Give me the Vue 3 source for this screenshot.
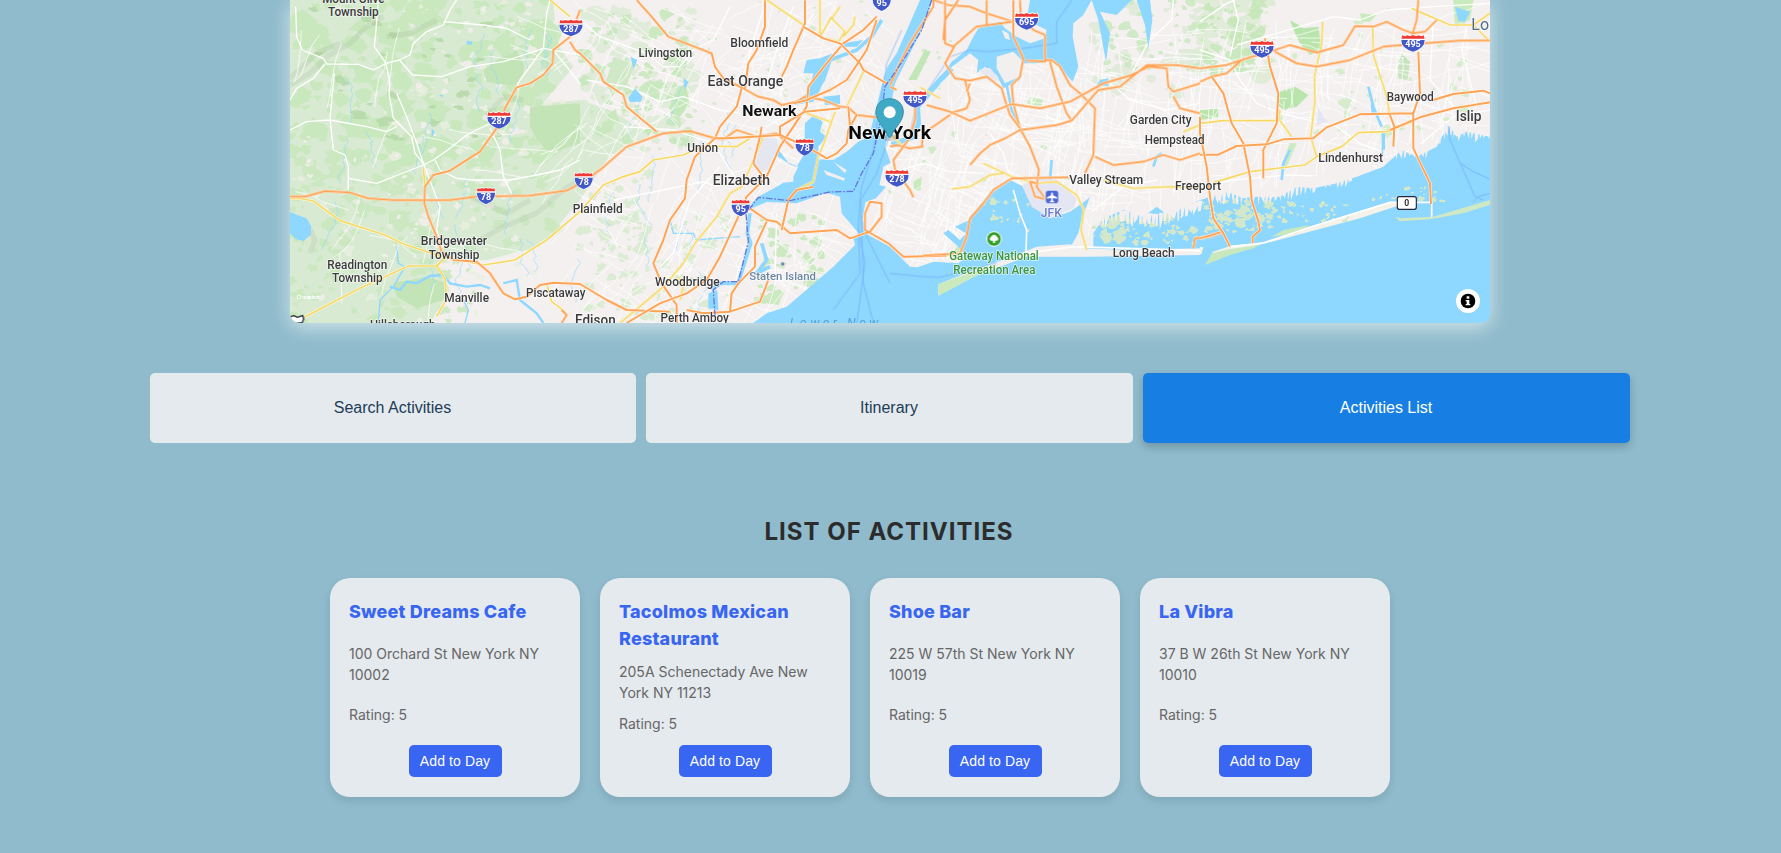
<script setup>
// Map sheets share one drawing space; each has its own horizontal offset.
const sheet = { A: -60, B: 870, C: 1800, D: 2730 }
const shift = (s) => `translate(${sheet[s]} 0)`

let seed = 41
const rnd = () => {
  seed = (seed * 1664525 + 1013904223) % 4294967296
  return seed / 4294967296
}
const snap = (v) => Math.round(v / 3) * 3

function scatter(count, x, y, w, h, min, max, flat = 0.8) {
  let d = ''
  for (let i = 0; i < count; i++) {
    const cx = x + rnd() * w
    const cy = y + rnd() * h
    const r = min + rnd() * rnd() * (max - min)
    const n = 9 + Math.floor(rnd() * 5)
    for (let k = 0; k < n; k++) {
      const a = (k / n) * Math.PI * 2
      const q = r * (0.45 + rnd() * 0.75)
      d += (k ? 'L' : 'M') + snap(cx + Math.cos(a) * q) + ' ' + snap(cy + Math.sin(a) * q * flat)
    }
    d += 'z'
  }
  return d
}

function streets(count, x, y, w, h, tilt, len) {
  let d = ''
  for (let i = 0; i < count; i++) {
    let px = x + rnd() * w
    let py = y + rnd() * h
    let a = tilt + (rnd() > 0.5 ? Math.PI / 2 : 0) + (rnd() - 0.5) * 0.5
    d += `M${Math.round(px)} ${Math.round(py)}`
    for (let k = 0; k < 4; k++) {
      a += (rnd() - 0.5) * 0.35
      px += Math.cos(a) * len * (0.4 + rnd() * 0.6)
      py += Math.sin(a) * len * (0.4 + rnd() * 0.6)
      d += `L${Math.round(px)} ${Math.round(py)}`
    }
  }
  return d
}

function streams(count, x, y, w, h) {
  let d = ''
  for (let i = 0; i < count; i++) {
    let px = x + rnd() * w
    let py = y + rnd() * h
    d += `M${Math.round(px)} ${Math.round(py)}`
    for (let k = 0; k < 12; k++) {
      px += (rnd() - 0.5) * 22
      py += 4 + rnd() * 12
      d += `L${Math.round(px)} ${Math.round(py)}`
    }
  }
  return d
}

// Narrow peninsulas hanging from the south shore into the bay
function teeth(points) {
  let d = ''
  for (let i = 0; i < points.length - 1; i++) {
    const [x1, y1] = points[i]
    const [x2, y2] = points[i + 1]
    for (let t = 0; t < 1; t += 13 / Math.abs(x2 - x1)) {
      const x = x1 + (x2 - x1) * t
      const y = y1 + (y2 - y1) * t
      const w = 3 + rnd() * 7
      d += `M${x - w} ${y - 18}L${x - w + 2} ${y + rnd() * 34}L${x + 2} ${y + 2 + rnd() * 28}L${x + w} ${y - 18}z`
    }
  }
  return d
}

const woods = [
  ['A', scatter(230, 60, 0, 780, 480, 12, 60), '#c5e7ba'],
  ['A', scatter(130, 60, 440, 800, 290, 8, 44), '#c8e8bd'],
  ['A', scatter(70, 60, 720, 560, 250, 8, 30), '#c8e8bd'],
  ['A', scatter(90, 60, 0, 850, 960, 5, 26), '#eaefe1'],
  ['A', scatter(120, 420, 0, 450, 960, 5, 22), '#f2efed'],
  ['A', scatter(24, 60, 400, 350, 500, 5, 18), '#f2efed'],
  ['A', scatter(30, 90, 20, 650, 420, 10, 36, 0.5), '#b5d8a8'],
  ['B', scatter(140, 0, 30, 350, 420, 8, 44), '#dcebd5'],
  ['B', scatter(100, 0, 30, 330, 400, 6, 34), '#c5e7ba'],
  ['B', scatter(50, 0, 500, 220, 250, 6, 30), '#d7ebcf'],
  ['B', scatter(80, 20, 640, 420, 320, 6, 30), '#d7ebcf'],
  ['B', scatter(38, 320, 0, 540, 460, 5, 15), '#d4ebcb'],
  ['B', scatter(40, 530, 650, 200, 250, 8, 38), '#c4e7b8'],
  ['C', scatter(26, 0, 20, 550, 680, 5, 20), '#cdeac3'],
  ['C', scatter(34, 600, 0, 330, 280, 8, 50), '#deead7'],
  ['C', scatter(36, 650, 0, 280, 220, 6, 30), '#c9e9bf'],
  ['D', scatter(90, 0, 0, 210, 220, 8, 50), '#dcebd3'],
  ['D', scatter(60, 0, 0, 190, 210, 6, 34), '#c3e7b7'],
  ['D', scatter(42, 200, 0, 610, 420, 5, 28), '#d0ebc7']
]

const parks = [
  ['A', 'M680 180L740 150L765 200L750 240L725 258L650 245L640 210z', '#c2e4b6'],
  ['A', 'M780 320L930 310L930 430L840 460L800 420L780 380z', '#c2e4b6'],
  ['A', 'M370 850L470 830L530 850L520 900L440 925L380 890z', '#c2e4b6'],
  ['B', 'M315 250L330 310L300 350L270 340L275 290z', '#c5e8ba'],
  ['B', 'M100 170L165 195L140 255L95 290L80 240z', '#d0e8c6'],
  ['C', 'M105 150L122 155L80 240L55 240z', '#c2e6b7'],
  ['C', 'M180 768L225 710L270 712L275 752L240 775z', '#c8eabc'],
  ['C', 'M420 290L458 300L456 318L410 312z', '#c8eabc'],
  ['C', 'M70 545L95 530L92 570L72 572z', '#c8eabc'],
  ['D', 'M270 60L310 85L355 80L365 150L330 165L300 130L285 100z', '#b9e4ac'],
  ['D', 'M240 275L285 260L325 285L290 320L250 330L235 315z', '#b9e4ac'],
  ['D', 'M0 330L55 325L55 352L0 360z', '#b9e4ac'],
  ['D', 'M605 160L630 185L622 240L595 235L592 190z', '#c8e3be'],
  ['D', 'M270 430L290 430L265 490L245 520L248 485z', '#cceac3'],
  ['D', 'M480 40L530 45L510 65L485 65z', '#c8eabc'],
  ['D', 'M760 0L820 0L810 60L765 75z', '#c8eabc']
]

const smallRoads = [
  ['A', streets(24, 60, 0, 700, 900, 0.3, 60)],
  ['B', streets(210, -20, -20, 850, 960, 0.55, 60)],
  ['B', streets(70, 480, 0, 440, 500, 1.1, 40)],
  ['C', streets(150, 180, 150, 440, 480, 0.25, 55)],
  ['C', streets(90, -30, 400, 260, 370, 0.4, 40)],
  ['C', streets(80, 560, 80, 370, 520, 0.1, 55)],
  ['D', streets(150, 0, 60, 860, 420, 0.12, 60)]
]

const whiteRoads = [
  ['A', 'M77 20L80 110L97 150L160 175L170 192L265 193L310 210L348 190L388 180L420 165L430 130L470 95L520 75L540 30L560 0'],
  ['A', 'M60 300L80 265L130 235L165 192M325 0L318 90L313 140L348 190L360 250L357 280L370 355L425 410L435 460L460 490L510 620L500 690L515 750'],
  ['A', 'M388 180L428 225L515 230L600 200L700 185L820 145L930 165M820 145L750 240L720 300M820 145L830 40L840 0M850 150L930 250'],
  ['A', 'M235 535L320 550L460 495L490 480L540 445L590 405L650 375L700 360M235 535L235 570M495 480L510 510L560 535L610 540L720 540L800 525L870 510L930 480M660 385L690 450L700 530L725 580'],
  ['A', 'M60 390L110 365L180 360L290 380L350 395L380 380M193 220L180 355L190 450L225 465L235 500L235 570M380 280L410 350L440 430L460 490M520 65L640 75L710 85L780 120'],
  ['B', 'M0 60L60 110L130 135L200 160L250 200L300 200L340 150L400 120L450 20M20 240L140 260L240 305L310 290L420 330L480 340M100 600L250 570L370 545L410 560L440 540'],
  ['B', 'M560 0L520 120L500 200M640 20L590 150L560 250M700 40L620 180L600 290M240 800L280 760L330 600L420 500M590 640L585 830L620 860M130 380L280 390L400 430L470 540'],
  ['C', 'M370 570L390 640L410 690L408 760L590 740M370 570L340 460L300 400M0 520L100 490L180 515L280 520M190 690L240 770L265 800M850 0L845 60L780 120L730 210M640 230L720 300L830 330L930 310M600 640L700 560L800 540'],
  ['D', 'M0 65L80 10L105 0M100 0L115 60L90 170M0 150L90 180L120 240L170 310L240 340L410 380L480 430L560 460M110 135L300 80L400 50L480 60L560 30L700 20L870 10M700 60L690 240L780 340M800 80L785 150L830 320M0 560L100 540L260 525L400 530L520 480L640 450L760 350L870 330']
]

const ocean = [
  ['B', 'M520 969L560 940L620 920L690 860L760 800L825 735L820 715L838 702L815 675L785 640L780 590L740 578L650 610L560 606L515 625L515 610L535 590L590 560L610 548L640 545L655 500L625 488L588 438L582 462L632 494L650 500L675 458L688 480L705 455L715 478L760 480L800 455L835 425L868 410L884 340L905 260L920 205L950 160L985 80L1020 0L1056 0L1035 70L990 160L945 250L930 330L930 380L915 440L932 488L910 500L898 555L918 560L888 595L856 607L848 660L865 705L930 740L960 770L990 800L1060 805L1140 790L1140 835L1180 870L3600 969z'],
  ['B', 'M675 370L702 345L728 365L720 395L740 410L715 440L715 470L700 520L670 560L645 600L640 530L672 465z'],
  ['C', 'M0 808L75 805L130 785L205 790L230 770L210 745L160 700L175 690L210 720L228 700L195 680L238 660L290 590L360 540L400 560L425 610L480 655L540 635L590 600L600 590L582 640L565 700L545 735L610 745L610 700L640 655L700 630L760 650L800 620L840 650L880 620L930 600L1010 575L1060 595L1090 590L1170 590L1220 560L1270 565L1340 550L1400 530L1480 500L1535 450L1580 470L1640 440L1675 375L1700 410L1730 395L1800 410L1800 969L-200 969z'],
  ['C', 'M165 215L185 185L230 150L250 110L265 85L330 65L345 85L380 110L420 130L465 115L470 90L410 60L420 0L605 0L580 45L550 70L548 110L565 200L548 245L525 220L490 180L440 190L400 190L390 240L340 265L320 225L285 200L260 220L265 180L240 160L200 190z'],
  ['C', 'M605 0L625 60L648 185L660 100L630 35L680 45L725 0zM740 0L765 75L775 145L787 60L780 0zM630 240L655 235L655 258L620 255z'],
  ['B', 'M680 180L720 175L760 160L745 210L720 270L700 305L640 315L685 275L700 220L670 220zM730 290L780 285L780 312L735 315zM790 130L850 120L830 140L780 140zM385 880L412 870L415 930L385 925z'],
  ['B', 'M152 170L172 180L160 208zM145 295L165 265L187 290L183 305L150 306zM310 235L325 245L315 270z'],
  ['A', 'M60 635L82 645L110 655L124 680L122 705L100 723L78 718L60 700zM590 122L608 125L603 135L590 132zM505 284L520 286L518 292zM485 385L494 395L485 415z'],
  ['D', 'M765 20L810 35L795 65L775 62zM512 310L530 335L515 345zM545 400L555 400L555 465L545 465z']
]

const islands = [
  ['B', 'M730 510L795 535L792 542L740 525zM760 485L800 510L795 520z', '#f2efef'],
  ['C', 'M145 887L145 853L265 805L350 776L440 740L540 733L590 745L550 770L410 770L330 800L250 830z', '#f3f0ee'],
  ['C', 'M145 887L145 853L265 810L330 792L250 832z', '#cbe9bd'],
  ['C', 'M550 770L575 745L720 750L930 745L930 765L740 768L600 770z', '#f3f0ee'],
  ['D', 'M0 740L10 742L5 762L0 763zM35 757L90 738L190 727L330 680L570 605L610 612L480 655L300 703L150 742L50 765z', '#f4f2e9'],
  ['D', 'M15 795L35 760L90 747L180 735L160 745L90 765zM215 710L250 690L330 675L290 700z', '#c8e8be'],
  ['D', 'M585 650L602 655L700 650L870 600L870 614L790 640L690 658L600 664z', '#cfe9c4'],
  ['C', scatter(16, 260, 600, 270, 100, 5, 24), '#d2e8ca'],
  ['C', 'M320 170L370 155L400 185L390 230L345 250L320 205zM335 90L355 100L360 120L345 115z', '#f2efef'],
  ['C', 'M265 210L300 203L328 240L310 245z', '#e7e8f2'],
  ['C', scatter(80, 610, 650, 320, 80, 4, 22), '#d3e7ca'],
  ['D', scatter(80, 0, 600, 220, 95, 4, 22), '#d3e7ca'],
  ['D', scatter(38, 200, 605, 250, 65, 4, 19), '#d3e7ca'],
  ['D', scatter(24, 520, 560, 220, 44, 3, 12), '#d3e7ca'],
  ['C', teeth([[600, 655], [700, 650], [800, 660], [930, 620]]), '#f3f0ef'],
  ['D', teeth([[0, 585], [60, 590], [240, 580], [350, 545], [440, 528], [540, 473], [590, 450], [680, 450], [740, 388], [870, 402]]), '#f3f0ef'],
  ['B', 'M550 415L590 415L595 440L565 505L540 520L525 490L530 440z', '#e4e6f0'],
  ['C', 'M395 555L450 535L500 540L560 595L550 625L480 655L425 620z', '#e4e6f3'],
  ['D', 'M355 320L370 350L385 365L350 375z', '#e4e6f3']
]

const lanes = [
  ['B', 'M965 90L920 190L905 280L890 380L880 450L845 560L840 600L835 690L855 790L830 969M930 400L890 520L842 600L845 690L850 850L880 969M835 690L840 820L760 930M855 700L930 850'],
  ['C', 'M0 820L100 830L150 832L320 790M545 0L500 65L500 130L400 145L290 155L240 150L180 170L120 260L75 330L60 400'],
  ['D', 'M745 380L750 420L825 590L850 600M780 490L820 515L870 538M820 605L835 590L870 580']
]

const yellowRoads = [
  ['A', 'M60 595L95 596L130 603L210 662L345 705L400 732L515 770L640 795L735 780L830 720L930 635L960 600L1000 555L1060 530L1110 515L1150 480L1240 465L1300 438L1400 440L1440 415'],
  ['A', 'M105 950L270 865L415 798L500 798L525 835L530 895L500 950M500 798L530 770M460 505L465 560M840 0L900 50M830 850L845 905L885 935'],
  ['B', 'M120 969L250 860L310 790L345 730L410 650L450 580L485 560L525 470L550 410M300 900L310 860L295 830M560 0L670 75M755 50L720 110L720 0M755 55L795 95L775 125L740 115M825 50L820 75L790 110M680 340L750 365M855 205L800 320M765 335L735 420L715 470L700 545L650 570M780 20L755 55'],
  ['C', 'M90 262L150 295M280 490L365 530L440 550L500 545L560 585L582 630L573 690L590 750M185 567L240 560L300 525L340 520M640 540L730 565L840 560L930 563M880 395L930 375M0 400L40 440'],
  ['D', 'M0 370L70 362L235 362L240 330M240 362L275 410M368 65L365 130L343 230L345 300L332 410L350 470L315 495L150 515L40 548M350 470L425 440L475 398L560 395L640 365M518 80L520 165L560 290L570 350M635 25L750 75L820 75L870 40M820 75L870 125']
]

const orangeRoads = [
  ['A', 'M60 590L105 590L165 573L240 578L295 595L370 600L540 600L620 590L780 587L890 572L930 550L990 510L1070 440L1180 400L1260 393L1335 415L1360 418L1400 390L1460 410L1520 400L1570 445'],
  ['A', 'M930 30L900 110L850 150L848 190L820 225L780 250L740 262L705 325L690 370L630 455L540 512L490 525L465 560L463 610L475 650L500 710L515 755L550 780L620 785L660 820L700 880L735 898L770 890L810 855L850 848L930 852L1010 900L1070 930L1200 935'],
  ['A', 'M900 125L915 150L930 160L990 220L1000 245L1060 285L1070 320L1160 395M875 969L890 945L875 930'],
  ['B', 'M170 0L215 50L265 110L305 125L395 160L405 200L430 235L490 265L535 290L580 300L605 315L650 305L675 290L730 300L780 320L805 322L830 345L920 355'],
  ['B', 'M485 265L470 320L420 380L405 415L345 470L320 540L315 595L270 660L250 720L220 790L245 850L290 915L290 969'],
  ['B', 'M555 0L555 80L530 150L505 190L495 265M675 0L675 70L640 150L620 200L605 230'],
  ['B', 'M140 969L240 910L320 880L380 840L420 770L475 650L500 590L560 530L600 440L650 365L680 320L685 260L740 190L790 130L850 90L890 50'],
  ['B', 'M405 415L440 415L520 410L600 405L680 440L740 475L770 460L800 430L805 390L830 345M545 380L540 410L520 490L550 530M600 405L600 380L675 335L780 325'],
  ['B', 'M510 625L560 660L590 665L630 700L770 690L810 715L870 695L905 650L905 610L870 605L855 640L855 690L925 730L970 770L1100 767'],
  ['B', 'M560 665L525 740L525 800L475 850L455 880L450 935M605 690L625 600L650 570L700 560M320 930L370 940L450 935L540 905L565 840'],
  ['B', 'M670 80L730 115L780 130L840 190L850 210L920 250M680 300L750 270L800 240L860 150L890 60M685 300L640 310M805 320L810 380'],
  ['C', 'M0 255L30 190L60 130L130 20L130 0L175 15L240 20L290 40L370 65L370 110L400 175L390 230L365 255L370 310L390 385L420 440L447 510L440 560L465 595'],
  ['C', 'M165 0L165 130L190 140M205 0L165 60L160 120M290 0L290 75M370 65L260 80L195 135L165 190L195 235L240 242L290 230L335 265L345 300L360 345L390 385M225 240L240 300L230 325L180 340'],
  ['C', 'M370 0L370 65M390 0L392 40L430 90L465 105L465 185L410 182M465 180L485 180L510 200L540 255L570 280L615 325L610 465L585 520M480 185L500 260L530 340L545 362'],
  ['C', 'M110 315L180 335L240 362L365 312L450 325L540 305L640 250L725 225L775 200L830 205L835 260L850 275L930 250M545 362L500 375L390 390L345 415L300 435L270 460L240 495M545 362L625 270L690 260L770 195L860 195L930 205'],
  ['C', 'M535 532L365 535L310 570L280 610L240 655L230 710L210 760L100 767M440 550L420 545L435 590L465 597M615 470L670 495L760 485L820 465L870 480L930 460M850 290L870 325L930 340M100 440L60 445L20 435L0 440M95 440L100 400L180 345'],
  ['C', 'M0 260L20 270M240 250L230 275M30 530L60 570L70 592M75 320L75 360L55 420L10 480L20 530M910 745L915 715L960 710L1000 695'],
  ['D', 'M0 205L80 195L150 172L210 155L270 135L350 158L430 135L465 78L520 80L560 65L610 90L640 100L675 95L710 60M0 245L35 230L80 220L125 180L150 172M225 155L290 190L350 200L450 180L550 140L640 132L780 122L870 122M655 0L650 60L635 110'],
  ['D', 'M35 230L70 280L95 370L130 430L150 530L155 600L175 665L180 690L158 710L158 730M195 115L210 200L235 280L230 370L190 450L190 535'],
  ['D', 'M0 464L55 464L110 438L200 433L250 418L340 415L380 382L480 343L640 340L660 280L655 155M570 345L583 380L580 440M570 390L660 352L760 325L870 307M700 300L760 282L850 272L870 280M640 340L640 445L690 550L693 612'],
  ['D', 'M0 350L0 400L20 500L30 590L40 655L70 700L90 740M0 715L60 697']
]

const labels = [
  ['A', 250, 8, 'Mount Olive', 187], ['A', 250, 48, 'Township', 152],
  ['A', 552, 736, 'Bridgewater', 199], ['A', 552, 777, 'Township', 152],
  ['A', 262, 807, 'Readington', 180], ['A', 262, 847, 'Township', 152],
  ['A', 590, 906, 'Manville', 134], ['A', 857, 891, 'Piscataway', 178],
  ['A', 398, 986, 'Hillsborough', 196],
  ['B', 256, 172, 'Livingston', 161], ['B', 538, 141, 'Bloomfield', 174],
  ['B', 496, 257, 'East Orange', 227, 42], ['B', 568, 348, 'Newark', 163, 44, 700, '#111'],
  ['B', 368, 456, 'Union', 92], ['B', 484, 555, 'Elizabeth', 172, 42],
  ['B', 53, 640, 'Plainfield', 150], ['B', 322, 858, 'Woodbridge', 194],
  ['B', 344, 966, 'Perth Amboy', 205], ['B', 46, 974, 'Edison', 122, 42],
  ['B', 608, 839, 'Staten Island', 200, 35, 500, '#6c86a4'],
  ['C', -1, 416, 'New York', 248, 54, 700, '#090909'],
  ['C', 812, 372, 'Garden City', 185], ['C', 854, 431, 'Hempstead', 180],
  ['C', 649, 552, 'Valley Stream', 222], ['C', 924, 571, 'Freeport', 138],
  ['C', 761, 770, 'Long Beach', 186],
  ['C', 484, 651, 'JFK', 63, 36, 500, '#6b7bcf'],
  ['C', 312, 779, 'Gateway National', 268, 36, 500, '#39943a'],
  ['C', 313, 822, 'Recreation Area', 246, 36, 500, '#39943a'],
  ['D', 452, 487, 'Lindenhurst', 194], ['D', 631, 304, 'Baywood', 141],
  ['D', 806, 363, 'Islip', 77, 42]
]

const shields = [
  ['A', 903, 84, '287'], ['A', 687, 361, '287'], ['A', 648, 588, '78'], ['B', 11, 543, '78'],
  ['B', 674, 442, '78'], ['B', 482, 624, '95'], ['B', 905, 8, '95'], ['C', 410, 64, '695'],
  ['C', 75, 298, '495'], ['C', 21, 535, '278'], ['D', 186, 148, '495'], ['D', 639, 130, '495']
]

const tabs = [
  { name: 'Search Activities', active: false },
  { name: 'Itinerary', active: false },
  { name: 'Activities List', active: true }
]

const activities = [
  { name: 'Sweet Dreams Cafe', address: '100 Orchard St New York NY 10002', rating: 5 },
  { name: 'Tacolmos Mexican Restaurant', address: '205A Schenectady Ave New York NY 11213', rating: 5 },
  { name: 'Shoe Bar', address: '225 W 57th St New York NY 10019', rating: 5 },
  { name: 'La Vibra', address: '37 B W 26th St New York NY 10010', rating: 5 }
]
</script>

<template>
  <main class="page">
    <section class="map">
      <svg class="map-canvas" viewBox="0 0 3600 969">
        <rect width="3600" height="969" fill="#f3f0ef" />
        <path
          d="M0 0H790L800 130L850 200L760 310L870 300L960 330L1060 390L950 480L870 600L750 740L590 780L440 790L480 870L420 969H0z"
          fill="#d9ead2"
        />
        <path v-for="(p, i) in woods" :key="'w' + i" :transform="shift(p[0])" :d="p[1]" :fill="p[2]" opacity="0.85" />
        <path v-for="(p, i) in parks" :key="'p' + i" :transform="shift(p[0])" :d="p[1]" :fill="p[2]" />
        <g fill="none" stroke="#8f9f84" stroke-width="16" opacity="0.14" stroke-linejoin="round">
          <path d="M0 255L60 220L110 170L180 130L230 80L280 50M0 235L80 160L150 130M570 720L640 680L740 640L820 570L900 520M60 690L75 720L60 760M590 350L640 290L700 300M290 110L360 100L440 60M540 590L650 640L720 600" />
        </g>
        <g fill="none" stroke="#8ed7ff" stroke-width="2.5">
          <path :d="streams(22, 0, 0, 900, 850)" opacity="0.7" />
          <path :d="streams(12, 900, 200, 600, 650)" opacity="0.7" />
          <path stroke-width="7" d="M300 860L330 870L350 845L380 850L420 828L460 825L480 850L530 860L570 855L600 865M640 850L680 840L690 900L740 940L760 969" />
          <path stroke-width="4" d="M320 740L325 790L345 800L310 860L270 900L265 969M1140 660L1150 700L1210 700L1220 720L1280 715L1350 710M525 969L535 930L520 900" />
        </g>
        <g fill="none" stroke="#fff" stroke-linejoin="round">
          <path v-for="(p, i) in smallRoads" :key="'s' + i" :transform="shift(p[0])" :d="p[1]" stroke-width="2.4" opacity="0.9" />
        </g>
        <g fill="none" stroke="#fff" stroke-width="4" stroke-linejoin="round">
          <path v-for="(p, i) in whiteRoads" :key="'wr' + i" :transform="shift(p[0])" :d="p[1]" />
        </g>
        <path v-for="(p, i) in ocean" :key="'o' + i" :transform="shift(p[0])" :d="p[1]" fill="#8ed7ff" />
        <g fill="none" stroke="#8ed7ff" stroke-linejoin="round">
          <path stroke-width="16" d="M1985 205L1950 240L1920 275L1882 320L1885 370L1870 410L1805 435" />
          <path stroke-width="11" d="M1380 640L1372 700L1382 730L1360 800L1345 850L1290 850L1265 870M1415 730L1430 780L1400 820L1440 800M1775 60L1745 110L1700 150L1620 180L1600 240L1550 300" />
          <path stroke-width="8" d="M2150 255L2165 330L2190 380M2590 500L2600 470L2615 460M2280 540L2285 480M2975 540L2980 490L3000 450M3235 260L3250 320L3275 380" />
        </g>
        <path v-for="(p, i) in islands" :key="'i' + i" :transform="shift(p[0])" :d="p[1]" :fill="p[2]" />
        <path d="M2170 570L2190 640L2210 690L2208 760L2350 740L2730 752M2820 740L2920 729L3060 682L3300 607L3425 607V650" fill="none" stroke="#fff" stroke-width="5" />
        <g fill="none" stroke="#6aa5f3" stroke-width="2.5" opacity="0.7">
          <path v-for="(p, i) in lanes" :key="'l' + i" :transform="shift(p[0])" :d="p[1]" />
        </g>
        <g fill="none" stroke-linejoin="round">
          <g v-for="(p, i) in yellowRoads" :key="'y' + i" :transform="shift(p[0])">
            <path :d="p[1]" stroke="#fffdf4" stroke-width="8" />
            <path :d="p[1]" stroke="#f7d863" stroke-width="5.2" />
          </g>
          <g v-for="(p, i) in orangeRoads" :key="'r' + i" :transform="shift(p[0])">
            <path :d="p[1]" stroke="#fff8f0" stroke-width="9" />
            <path :d="p[1]" stroke="#ffa456" stroke-width="6" />
          </g>
          <path
            d="M1925 0L1895 90L1840 180L1785 260L1772 360L1750 460L1715 520L1690 574L1620 576L1500 602L1405 592L1368 640L1375 725L1345 845L1300 845L1270 870L1275 945"
            stroke="#6478dc" stroke-width="4" stroke-dasharray="20 5 5 5"
          />
        </g>

        <text class="label plain" x="1632" y="982" font-size="38" fill="#56a3dc" font-style="italic" text-anchor="middle" textLength="266">Lower New</text>
        <text class="label" x="3544" y="91" font-size="48" fill="#506a87">Long Island</text>
        <text
          v-for="(t, i) in labels" :key="'t' + i" class="label" :transform="shift(t[0])" :x="t[1]" :y="t[2]"
          :font-size="t[5] || 39" :font-weight="t[6] || 500" :fill="t[7] || '#3a3a3d'"
          :textLength="t[4]" lengthAdjust="spacingAndGlyphs" text-anchor="middle"
        >{{ t[3] }}</text>

        <g v-for="(s, i) in shields" :key="'h' + i" :transform="`translate(${sheet[s[0]] + s[1]} ${s[2]})`">
          <g :transform="s[3].length === 2 ? 'scale(.78 1)' : ''">
            <path d="M-34 -27Q-25 -21 -17 -27Q-9 -22 0 -27Q9 -22 17 -27Q25 -21 34 -27L37 -10Q38 14 0 27Q-38 14 -37 -10z" fill="#fff" />
            <path d="M-32 -24Q-25 -19 -17 -24Q-9 -20 0 -25Q9 -20 17 -24Q25 -19 32 -24L35 -14H-35z" fill="#ee3b38" />
            <path d="M-35 -10H35Q36 14 0 25Q-36 14 -35 -10z" fill="#4358c8" />
          </g>
          <text class="label plain" y="11" font-size="25" font-weight="700" fill="#fff" text-anchor="middle" :textLength="s[3].length * 15.5" lengthAdjust="spacingAndGlyphs">{{ s[3] }}</text>
        </g>

        <g transform="translate(3350 609)">
          <rect x="-28" y="-19" width="57" height="38" rx="6" fill="#fff" stroke="#24283a" stroke-width="3.5" />
          <text class="label plain" y="9" font-size="26" font-weight="700" fill="#333" text-anchor="middle">0</text>
        </g>
        <path d="M0 950L12 947L22 952L38 947L41 957L36 969H0z" fill="#fff" stroke="#24283a" stroke-width="4" />

        <circle cx="1478" cy="792" r="6.5" fill="#6c86a4" stroke="#fff" stroke-width="2" />
        <rect x="2266" y="571" width="40" height="40" rx="9" fill="#4c69d2" stroke="#fff" stroke-width="2" />
        <path d="M2286 577Q2289 577 2289 586L2301 592V596L2289 594L2288 601L2293 605V607H2279V605L2284 601L2283 594L2271 596V592L2283 586Q2283 577 2286 577z" fill="#fff" />
        <circle cx="2112" cy="717" r="22" fill="#33a02c" stroke="#fff" stroke-width="3" />
        <path d="M2102 722Q2096 715 2103 710Q2112 699 2121 710Q2128 715 2122 722H2115V729H2109V722z" fill="#fff" />

        <g opacity="0.9">
          <circle cx="27" cy="891" r="6" fill="none" stroke="#fff" stroke-width="3" />
          <text class="label plain" x="37" y="896" font-size="15" font-weight="700" fill="#fff" textLength="50">mapbox</text>
        </g>

        <g transform="translate(1799 337)">
          <ellipse cx="0" cy="76" rx="27" ry="10" fill="#000" opacity="0.13" />
          <path d="M0 -41C-24 -41 -41 -24 -41 -1C-41 28 -12 48 -5 72Q0 79 5 72C12 48 41 28 41 -1C41 -24 24 -41 0 -41z" fill="#3fa9c6" stroke="#328fa9" stroke-width="3" />
          <circle r="18" fill="#fff" />
        </g>

        <g transform="translate(3534 903)">
          <circle r="36" fill="#fff" />
          <circle r="22" fill="#000" />
          <path d="M-4 -14H4V-7H-4zM-7 -3H4V9H7V13H-7V9H-4V1H-7z" fill="#fff" />
        </g>
      </svg>
    </section>

    <nav class="tabs">
      <button v-for="t in tabs" :key="t.name" class="tab" :class="{ active: t.active }">{{ t.name }}</button>
    </nav>

    <h2 class="heading">List of Activities</h2>

    <section class="cards">
      <article v-for="a in activities" :key="a.name" class="card">
        <h3 class="name">{{ a.name }}</h3>
        <p class="line">{{ a.address }}</p>
        <p class="line">Rating: {{ a.rating }}</p>
        <button class="add">Add to Day</button>
      </article>
    </section>
  </main>
</template>

<style>
body {
  background: #8fbbcc;
  overflow: hidden;
}
</style>

<style scoped>
.page {
  width: 1780px;
  height: 853px;
  font-family: Inter, 'Liberation Sans', sans-serif;
}
.map {
  width: 1200px;
  height: 323px;
  margin: 0 auto;
  border-radius: 0 0 10px 10px;
  box-shadow: 0 4px 20px rgba(255, 255, 255, 0.65);
}
.map-canvas {
  display: block;
  width: 1200px;
  height: 323px;
  border-radius: 0 0 10px 10px;
}
.label {
  font-family: Roboto, 'Liberation Sans', sans-serif;
  paint-order: stroke;
  stroke: rgba(255, 255, 255, 0.75);
  stroke-width: 4px;
  stroke-linejoin: round;
}
.plain {
  stroke: none;
}
.tabs {
  display: grid;
  grid-template-columns: 486px 487px 487px;
  gap: 10px;
  width: 1480px;
  height: 70px;
  margin: 50px auto 0;
}
.tab {
  padding: 0 1px 0 0;
  border: 0;
  border-radius: 5px;
  background: #e5eaee;
  color: #213c56;
  font: 16px 'Liberation Sans', Arial, sans-serif;
}
.tab.active {
  background: #177fe4;
  color: #fff;
  box-shadow: 0 4px 8px rgba(0, 0, 0, 0.2);
}
.heading {
  margin: 70px 0 0;
  padding-right: 2px;
  line-height: 37px;
  text-align: center;
  text-transform: uppercase;
  font-size: 24px;
  font-weight: 700;
  letter-spacing: 1px;
  color: #2c2c2c;
}
.cards {
  display: grid;
  grid-template-columns: repeat(4, 250px);
  gap: 20px;
  width: 1120px;
  margin: 28px auto 0;
}
.card {
  box-sizing: border-box;
  height: 219px;
  padding: 20px 19px;
  display: flex;
  flex-direction: column;
  justify-content: space-between;
  border-radius: 20px;
  background: #e5eaee;
  box-shadow: 0 4px 8px rgba(0, 0, 0, 0.1);
}
.name {
  margin: 0;
  font-size: 18px;
  line-height: 27px;
  font-weight: 800;
  letter-spacing: 0.2px;
  color: #3866f2;
}
.line {
  margin: -1px 0 1px;
  font-size: 14px;
  line-height: 21px;
  color: #666;
}
.add {
  align-self: center;
  width: 93px;
  height: 32px;
  padding: 0;
  border: 0;
  border-radius: 5px;
  background: #3866f2;
  color: #fff;
  font: 14px 'Liberation Sans', Arial, sans-serif;
  letter-spacing: 0.1px;
}
</style>
